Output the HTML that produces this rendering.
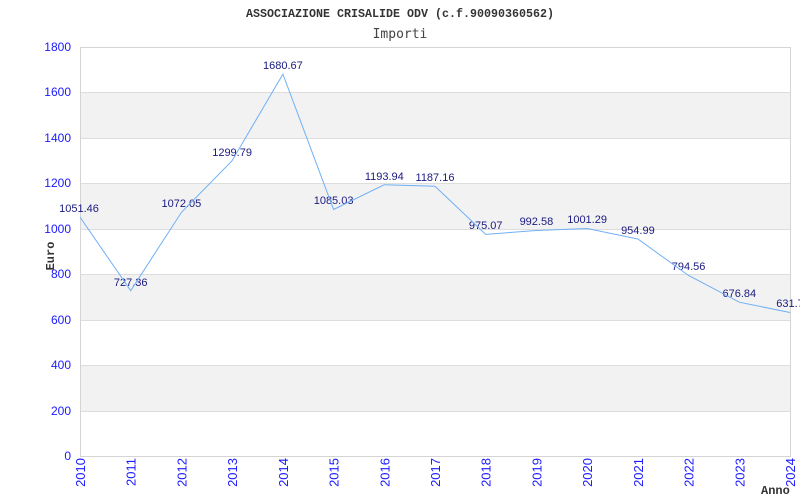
<!DOCTYPE html>
<html><head><meta charset="utf-8"><style>
html,body{margin:0;padding:0;background:#fff;width:800px;height:500px;overflow:hidden}
</style></head><body>
<svg width="800" height="500" xmlns="http://www.w3.org/2000/svg">
<rect width="800" height="500" fill="#fff"/>
<text x="246" y="17" textLength="308" lengthAdjust="spacingAndGlyphs" font-family="Liberation Mono, monospace" font-weight="bold" font-size="11.5" fill="#333">ASSOCIAZIONE CRISALIDE ODV (c.f.90090360562)</text>
<text x="400" y="38" text-anchor="middle" font-family="DejaVu Sans Mono, monospace" font-size="13" fill="#444">Importi</text>
<g fill="#f2f2f2">
<rect x="80" y="92" width="710" height="46"/>
<rect x="80" y="183" width="710" height="46"/>
<rect x="80" y="274" width="710" height="46"/>
<rect x="80" y="365" width="710" height="46"/>
</g>
<g stroke="#ddd" stroke-width="1">
<line x1="80" y1="92.5" x2="790" y2="92.5"/>
<line x1="80" y1="138.5" x2="790" y2="138.5"/>
<line x1="80" y1="183.5" x2="790" y2="183.5"/>
<line x1="80" y1="229.5" x2="790" y2="229.5"/>
<line x1="80" y1="274.5" x2="790" y2="274.5"/>
<line x1="80" y1="320.5" x2="790" y2="320.5"/>
<line x1="80" y1="365.5" x2="790" y2="365.5"/>
<line x1="80" y1="411.5" x2="790" y2="411.5"/>
</g>
<rect x="80.5" y="47.5" width="710" height="409" fill="none" stroke="#d4d4d4" stroke-width="1"/>
<g font-family="Liberation Sans, sans-serif" font-size="12" fill="#1a1aff" text-anchor="end">
<text x="71" y="51">1800</text><text x="71" y="96">1600</text><text x="71" y="142">1400</text>
<text x="71" y="187">1200</text><text x="71" y="233">1000</text><text x="71" y="278">800</text>
<text x="71" y="324">600</text><text x="71" y="369">400</text><text x="71" y="415">200</text>
<text x="71" y="460">0</text>
</g>
<text transform="translate(54,256) rotate(-90)" text-anchor="middle" font-family="Liberation Mono, monospace" font-weight="bold" font-size="12" fill="#333">Euro</text>
<g font-family="Liberation Sans, sans-serif" font-size="13" fill="#1a1aff" text-anchor="end">
<text transform="translate(85,458) rotate(-90)">2010</text>
<text transform="translate(135.7,458) rotate(-90)">2011</text>
<text transform="translate(186.4,458) rotate(-90)">2012</text>
<text transform="translate(237.1,458) rotate(-90)">2013</text>
<text transform="translate(287.9,458) rotate(-90)">2014</text>
<text transform="translate(338.6,458) rotate(-90)">2015</text>
<text transform="translate(389.3,458) rotate(-90)">2016</text>
<text transform="translate(440,458) rotate(-90)">2017</text>
<text transform="translate(490.7,458) rotate(-90)">2018</text>
<text transform="translate(541.4,458) rotate(-90)">2019</text>
<text transform="translate(592.1,458) rotate(-90)">2020</text>
<text transform="translate(642.9,458) rotate(-90)">2021</text>
<text transform="translate(693.6,458) rotate(-90)">2022</text>
<text transform="translate(744.3,458) rotate(-90)">2023</text>
<text transform="translate(795,458) rotate(-90)">2024</text>
</g>
<text x="761" y="494" font-family="Liberation Mono, monospace" font-weight="bold" font-size="12" fill="#333">Anno</text>
<g font-family="Liberation Sans, sans-serif" font-size="11" fill="#1a1a80" text-anchor="middle">
<text x="79" y="212">1051.46</text>
<text x="130.7" y="286">727.36</text>
<text x="181.4" y="207">1072.05</text>
<text x="232.1" y="156">1299.79</text>
<text x="282.9" y="69">1680.67</text>
<text x="333.6" y="204">1085.03</text>
<text x="384.3" y="180">1193.94</text>
<text x="435" y="181">1187.16</text>
<text x="485.7" y="229">975.07</text>
<text x="536.4" y="225">992.58</text>
<text x="587.1" y="223">1001.29</text>
<text x="637.9" y="234">954.99</text>
<text x="688.6" y="270">794.56</text>
<text x="739.3" y="297">676.84</text>
<text x="790" y="307">631.7</text>
</g>
<polyline fill="none" stroke="#6fb0f5" stroke-width="1" points="80,217.1 130.7,290.7 181.4,212.4 232.1,160.7 282.9,74.1 333.6,209.5 384.3,184.7 435,186.3 485.7,234.4 536.4,230.5 587.1,228.5 637.9,239 688.6,275.5 739.3,302.2 790,312.5"/>
</svg>
</body></html>
